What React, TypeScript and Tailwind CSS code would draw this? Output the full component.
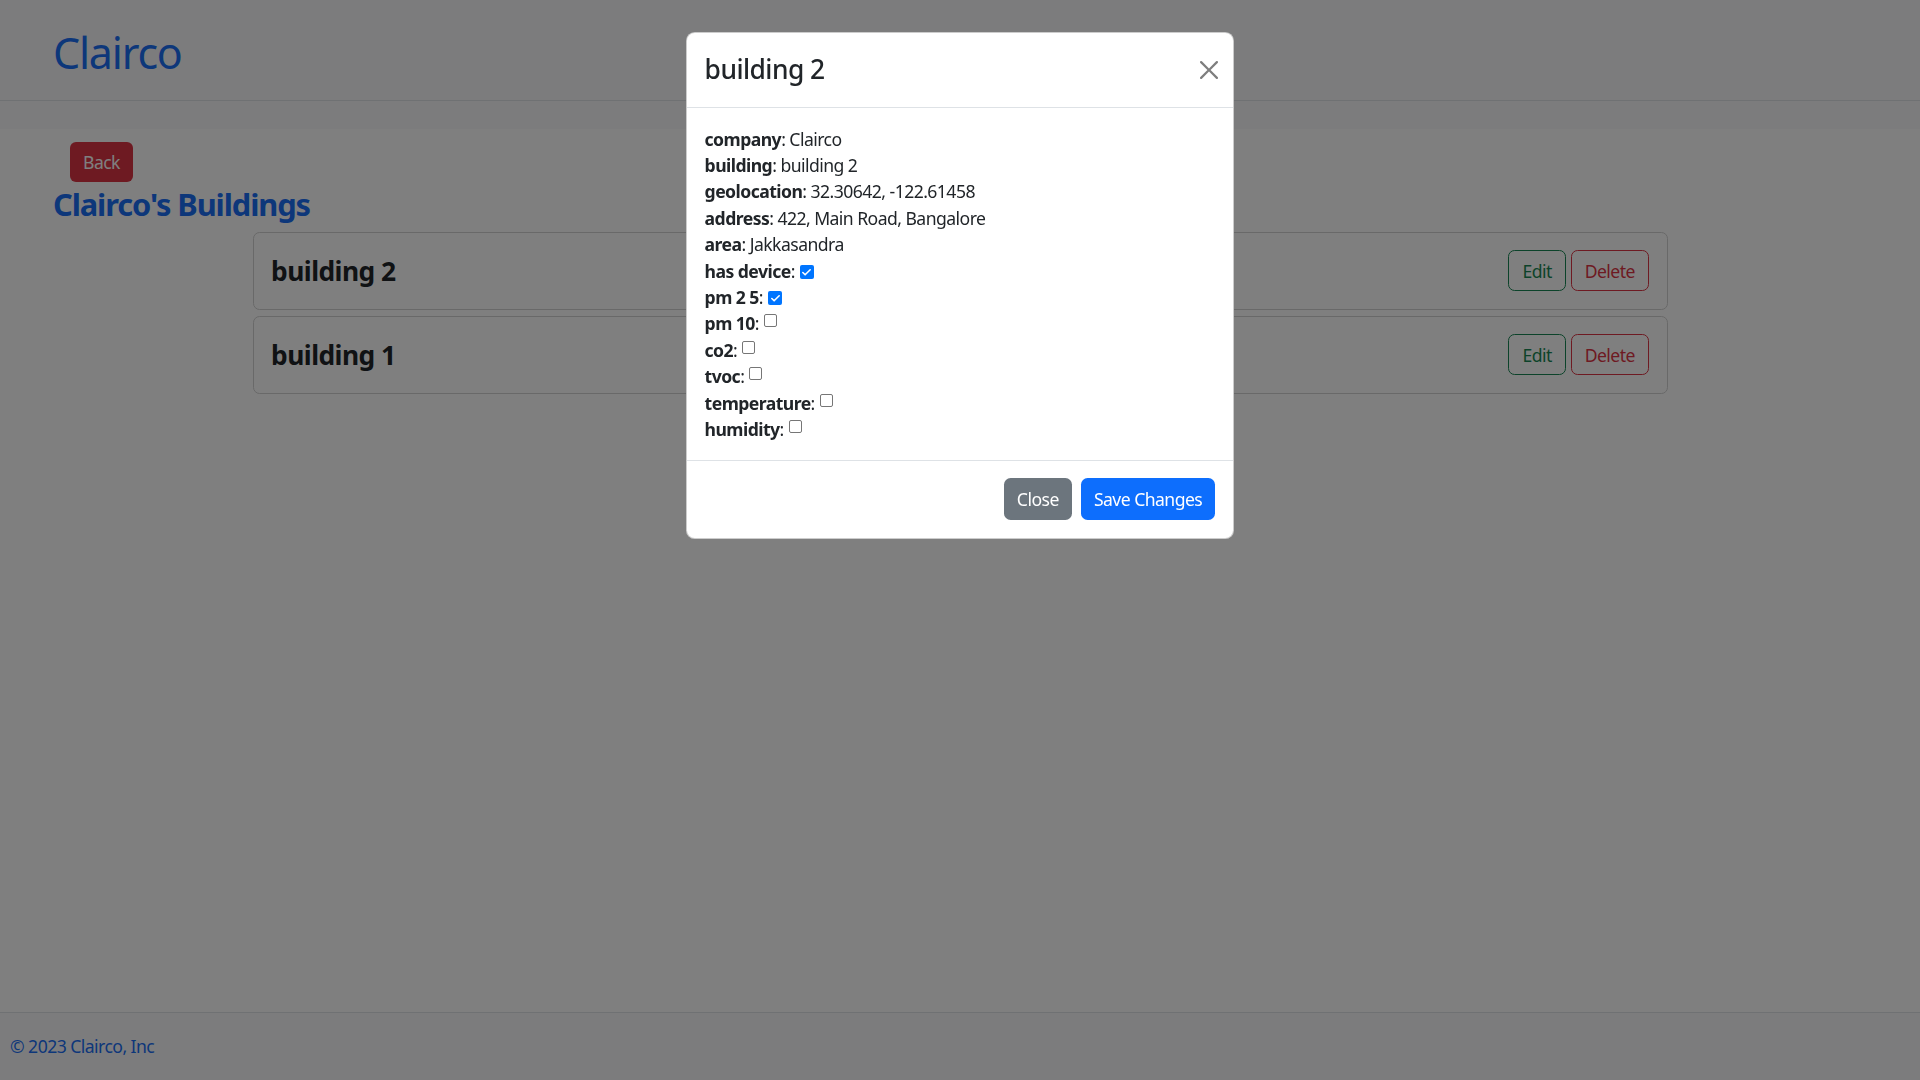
import { Check } from 'lucide-react';

const buildings = ['building 2', 'building 1'];

const details: { label: string; value?: string; checked?: boolean }[] = [
  { label: 'company', value: 'Clairco' },
  { label: 'building', value: 'building 2' },
  { label: 'geolocation', value: '32.30642, -122.61458' },
  { label: 'address', value: '422, Main Road, Bangalore' },
  { label: 'area', value: 'Jakkasandra' },
  { label: 'has device', checked: true },
  { label: 'pm 2 5', checked: true },
  { label: 'pm 10', checked: false },
  { label: 'co2', checked: false },
  { label: 'tvoc', checked: false },
  { label: 'temperature', checked: false },
  { label: 'humidity', checked: false },
];

function Box({ checked }: { checked: boolean }) {
  return checked ? (
    <span className="inline-flex w-[14px] h-[14px] ml-[5px] mb-[3px] align-baseline items-center justify-center rounded-[2px] bg-[#0075ff]">
      <Check size={11} strokeWidth={3.5} className="text-white" />
    </span>
  ) : (
    <span className="inline-block w-[13px] h-[13px] ml-[5px] mb-[3px] align-baseline rounded-[2px] border border-[#767676] bg-white" />
  );
}

export default function App() {
  return (
    <div className="relative min-h-screen flex flex-col bg-white text-[#212529] font-['Segoe_UI','Noto_Sans',sans-serif] text-[17.6px] leading-[1.5] tracking-[-0.55px]">
      <header className="h-[101px] flex items-center pt-[5px] px-[53px] bg-[#f8f9fa] border-b border-[#dee2e6]">
        <span className="text-[43px] leading-none tracking-[-1.2px] text-[#1a6ef5]">Clairco</span>
      </header>
      <div className="h-[28px] bg-[#f8f9fa]" />

      <main className="px-[53px] pt-[13px]">
        <button className="ml-[17px] h-[40px] px-[13px] rounded-[6px] bg-[#dc3545] text-white">Back</button>
        <h3 className="mt-[4px] mb-[9px] text-[30.8px] leading-[1.2] font-bold tracking-[-1.1px] text-[#1a6ef5]">Clairco's Buildings</h3>
        <div className="mx-auto w-[1415px] flex flex-col gap-[6px]">
          {buildings.map((b) => (
            <div key={b} className="h-[78px] flex items-center justify-between border border-[#d2d2d2] rounded-[6.6px] px-[17.6px] bg-white">
              <h4 className="pt-[2px] text-[26.4px] leading-[1.2] font-bold">{b}</h4>
              <div className="flex gap-[5px]">
                <button className="h-[41px] px-[13px] rounded-[6.6px] border border-[#198754] text-[#198754]">Edit</button>
                <button className="h-[41px] px-[13px] rounded-[6.6px] border border-[#dc3545] text-[#dc3545]">Delete</button>
              </div>
            </div>
          ))}
        </div>
      </main>

      <footer className="mt-auto h-[68px] flex items-center px-[10px] bg-[#f8f9fa] border-t border-[#dee2e6]">
        <span className="text-[#1a6ef5]">© 2023 Clairco, Inc</span>
      </footer>

      <div className="fixed inset-0 bg-black/50">
        <div className="mx-auto mt-[32px] w-[548px] bg-white border border-black/20 rounded-[8.8px]">
          <div className="flex items-center justify-between px-[17.6px] h-[75px] border-b border-[#dee2e6]">
            <h5 className="text-[26.4px] leading-[1.5] font-medium">building 2</h5>
            <button className="w-[18px] h-[18px] -mr-[3px] opacity-50">
              <svg viewBox="0 0 16 16" className="w-[18px] h-[18px]" fill="black">
                <path d="M.293.293a1 1 0 0 1 1.414 0L8 6.586 14.293.293a1 1 0 1 1 1.414 1.414L9.414 8l6.293 6.293a1 1 0 0 1-1.414 1.414L8 9.414l-6.293 6.293a1 1 0 0 1-1.414-1.414L6.586 8 .293 1.707a1 1 0 0 1 0-1.414z" />
              </svg>
            </button>
          </div>
          <div className="p-[17.6px]">
            {details.map((d) => (
              <div key={d.label} className="h-[26.4px]">
                <b className="font-bold">{d.label}</b>:
                {d.value !== undefined ? <span> {d.value}</span> : <Box checked={!!d.checked} />}
              </div>
            ))}
          </div>
          <div className="flex justify-end gap-[8.8px] px-[17.6px] py-[17.6px] border-t border-[#dee2e6]">
            <button className="h-[41.6px] px-[13.2px] rounded-[6.6px] bg-[#6c757d] text-white">Close</button>
            <button className="h-[41.6px] px-[13.2px] rounded-[6.6px] bg-[#0d6efd] text-white">Save Changes</button>
          </div>
        </div>
      </div>
    </div>
  );
}
